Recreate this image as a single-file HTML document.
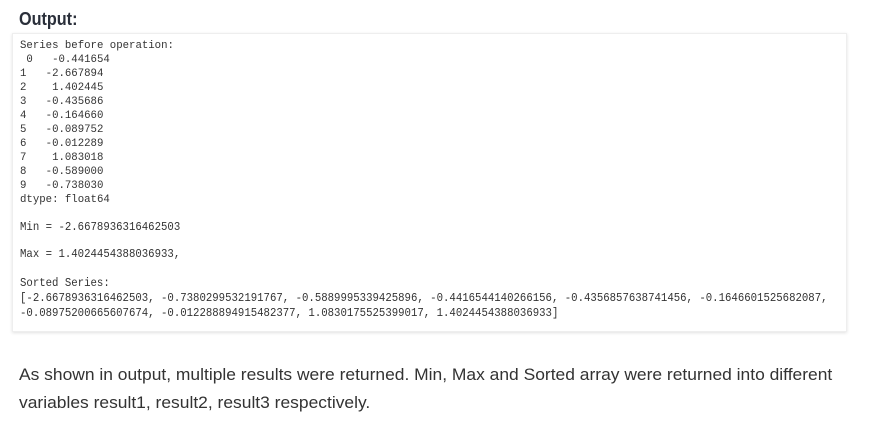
<!DOCTYPE html>
<html><head><style>
body{margin:0;background:#fff;width:879px;height:425px;overflow:hidden;position:relative;font-family:"Liberation Sans",sans-serif}
.a{position:absolute;white-space:pre;line-height:1}
h1{position:absolute;left:19px;top:9px;margin:0;font-size:18px;font-weight:bold;color:#2a2f3a;transform:scaleX(.9);transform-origin:left}
.box{position:absolute;left:12px;top:33px;width:833px;height:297px;background:#fff;border:1px solid #eee;box-shadow:0 1px 3px rgba(0,0,0,.12)}
.m{font-family:"Liberation Mono",monospace;font-size:10.7px;color:#333}
.n{font-family:"Liberation Mono",monospace;font-size:12px;color:#333;transform:scaleX(.89);transform-origin:left}
.p{font-size:17px;color:#333;transform:scaleX(1.025);transform-origin:left}
</style></head><body>
<h1>Output:</h1>
<div class="box"></div>
<div class="a m" style="left:20px;top:39px;line-height:14px">Series before operation:
 0   -0.441654
1   -2.667894
2    1.402445
3   -0.435686
4   -0.164660
5   -0.089752
6   -0.012289
7    1.083018
8   -0.589000
9   -0.738030
dtype: float64</div>
<div class="a n" style="left:20px;top:221px">Min = -2.6678936316462503</div>
<div class="a n" style="left:20px;top:248px">Max = 1.4024454388036933,</div>
<div class="a n" style="left:20px;top:276px;line-height:15px">Sorted Series:
[-2.6678936316462503, -0.7380299532191767, -0.5889995339425896, -0.4416544140266156, -0.4356857638741456, -0.1646601525682087,
-0.08975200665607674, -0.012288894915482377, 1.0830175525399017, 1.4024454388036933]</div>
<div class="a p" style="left:19px;top:366px">As shown in output, multiple results were returned. Min, Max and Sorted array were returned into different</div>
<div class="a p" style="left:19px;top:394px">variables result1, result2, result3 respectively.</div>
</body></html>
